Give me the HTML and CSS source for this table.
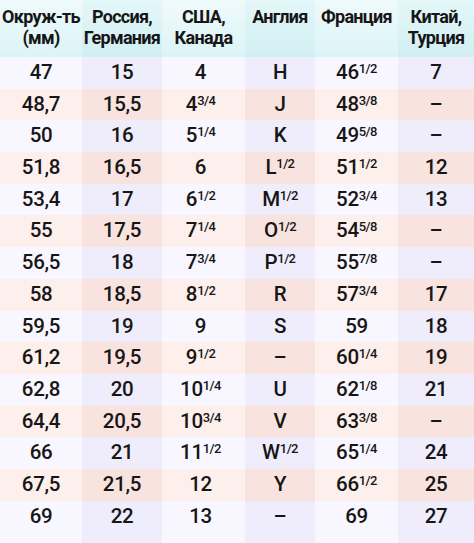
FILE: index.html
```html
<!DOCTYPE html>
<html lang="ru">
<head>
<meta charset="utf-8">
<title>Размеры колец</title>
<link rel="stylesheet" href="styles.css">
</head>
<body>
<div class="table">
  <div class="hc c1">Окруж-ть<br>(мм)</div>
  <div class="hc c2">Россия,<br>Германия</div>
  <div class="hc c3">США,<br>Канада</div>
  <div class="hc c4">Англия</div>
  <div class="hc c5">Франция</div>
  <div class="hc c6">Китай,<br>Турция</div>

  <div class="td r1 c1">47</div><div class="td r1 c2">15</div><div class="td r1 c3">4</div><div class="td r1 c4">H</div><div class="td r1 c5">46<sup>1/2</sup></div><div class="td r1 c6">7</div>
  <div class="td r2 c1">48,7</div><div class="td r2 c2">15,5</div><div class="td r2 c3">4<sup>3/4</sup></div><div class="td r2 c4">J</div><div class="td r2 c5">48<sup>3/8</sup></div><div class="td r2 c6">–</div>
  <div class="td r1 c1">50</div><div class="td r1 c2">16</div><div class="td r1 c3">5<sup>1/4</sup></div><div class="td r1 c4">K</div><div class="td r1 c5">49<sup>5/8</sup></div><div class="td r1 c6">–</div>
  <div class="td r2 c1">51,8</div><div class="td r2 c2">16,5</div><div class="td r2 c3">6</div><div class="td r2 c4">L<sup>1/2</sup></div><div class="td r2 c5">51<sup>1/2</sup></div><div class="td r2 c6">12</div>
  <div class="td r1 c1">53,4</div><div class="td r1 c2">17</div><div class="td r1 c3">6<sup>1/2</sup></div><div class="td r1 c4">M<sup>1/2</sup></div><div class="td r1 c5">52<sup>3/4</sup></div><div class="td r1 c6">13</div>
  <div class="td r2 c1">55</div><div class="td r2 c2">17,5</div><div class="td r2 c3">7<sup>1/4</sup></div><div class="td r2 c4">O<sup>1/2</sup></div><div class="td r2 c5">54<sup>5/8</sup></div><div class="td r2 c6">–</div>
  <div class="td r1 c1">56,5</div><div class="td r1 c2">18</div><div class="td r1 c3">7<sup>3/4</sup></div><div class="td r1 c4">P<sup>1/2</sup></div><div class="td r1 c5">55<sup>7/8</sup></div><div class="td r1 c6">–</div>
  <div class="td r2 c1">58</div><div class="td r2 c2">18,5</div><div class="td r2 c3">8<sup>1/2</sup></div><div class="td r2 c4">R</div><div class="td r2 c5">57<sup>3/4</sup></div><div class="td r2 c6">17</div>
  <div class="td r1 c1">59,5</div><div class="td r1 c2">19</div><div class="td r1 c3">9</div><div class="td r1 c4">S</div><div class="td r1 c5">59</div><div class="td r1 c6">18</div>
  <div class="td r2 c1">61,2</div><div class="td r2 c2">19,5</div><div class="td r2 c3">9<sup>1/2</sup></div><div class="td r2 c4">–</div><div class="td r2 c5">60<sup>1/4</sup></div><div class="td r2 c6">19</div>
  <div class="td r1 c1">62,8</div><div class="td r1 c2">20</div><div class="td r1 c3">10<sup>1/4</sup></div><div class="td r1 c4">U</div><div class="td r1 c5">62<sup>1/8</sup></div><div class="td r1 c6">21</div>
  <div class="td r2 c1">64,4</div><div class="td r2 c2">20,5</div><div class="td r2 c3">10<sup>3/4</sup></div><div class="td r2 c4">V</div><div class="td r2 c5">63<sup>3/8</sup></div><div class="td r2 c6">–</div>
  <div class="td r1 c1">66</div><div class="td r1 c2">21</div><div class="td r1 c3">11<sup>1/2</sup></div><div class="td r1 c4">W<sup>1/2</sup></div><div class="td r1 c5">65<sup>1/4</sup></div><div class="td r1 c6">24</div>
  <div class="td r2 c1">67,5</div><div class="td r2 c2">21,5</div><div class="td r2 c3">12</div><div class="td r2 c4">Y</div><div class="td r2 c5">66<sup>1/2</sup></div><div class="td r2 c6">25</div>
  <div class="td r1 last c1">69</div><div class="td r1 last c2">22</div><div class="td r1 last c3">13</div><div class="td r1 last c4">–</div><div class="td r1 last c5">69</div><div class="td r1 last c6">27</div>
</div>
</body>
</html>
```

FILE: styles.css
```css
html, body {
  margin: 0;
  padding: 0;
  background: #ffffff;
}

.table {
  display: grid;
  grid-template-columns: 82px 80px 83px 70px 83px 76px;
  width: 474px;
  font-family: Roboto, "Noto Sans", sans-serif;
  color: #161616;
}

.hc {
  height: 57px;
  box-sizing: border-box;
  padding-top: 6px;
  text-align: center;
  font-size: 18px;
  font-weight: 700;
  line-height: 21px;
  letter-spacing: -0.7px;
  background: linear-gradient(180deg, #effafb 0%, #dcf4f6 100%);
}

.hc.c2, .hc.c4, .hc.c6 {
  background: linear-gradient(180deg, #e4f7f9 0%, #d1eff2 100%);
}

.td {
  height: 31.7px;
  line-height: 31.7px;
  text-align: center;
  font-size: 20.5px;
  font-weight: 500;
  letter-spacing: -0.3px;
  white-space: nowrap;
}

.td.c3 {
  padding-right: 6px;
}

.td.last {
  height: 42.2px;
  padding-bottom: 10.5px;
  box-sizing: border-box;
}

.r1 { background: #f8f6fe; }
.r1.c2, .r1.c4, .r1.c6 { background: #efecfb; }
.r2 { background: #fcefec; }
.r2.c2, .r2.c4, .r2.c6 { background: #f8e3df; }

sup {
  font-size: 13px;
  line-height: 0;
  vertical-align: 6px;
  letter-spacing: -0.6px;
}
```
